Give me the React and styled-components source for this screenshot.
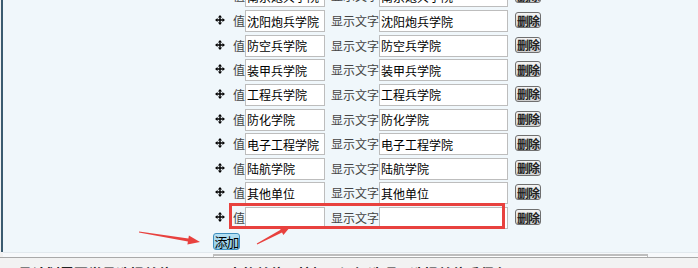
import React from "react";
import styled, { createGlobalStyle } from "styled-components";

const GlobalStyle = createGlobalStyle`
  html, body { margin: 0; padding: 0; }
  body {
    background: #f2f2f2;
    font-family: "Noto Sans CJK SC", "Liberation Sans", sans-serif;
    overflow: hidden;
  }
`;

const Page = styled.div`
  position: relative;
  width: 698px;
  height: 268px;
  overflow: hidden;
`;

const Panel = styled.div`
  margin-left: 1px;
  height: 252px;
  border-left: 2px solid #3b5b70;
  background: #f0f7fb;
  display: grid;
  grid-template-columns: 210px 1fr;
  overflow: hidden;
`;

const LabelCell = styled.div``;

const FieldCell = styled.div`
  display: flex;
  flex-direction: column;
  align-items: flex-start;
`;

const OptionList = styled.div`
  margin-top: -15.9px;
  display: flex;
  flex-direction: column;
`;

const OptionRow = styled.div`
  height: 24.625px;
  display: flex;
  align-items: center;
  padding-left: 2px;
`;

const Handle = styled.svg`
  width: 10px;
  height: 10px;
  margin-top: -2px;
  flex: none;
`;

const Label = styled.span`
  font-size: 12px;
  line-height: 14px;
  color: #444;
  white-space: nowrap;
  margin-left: ${p => p.$gap}px;
`;

const TextBox = styled.input`
  box-sizing: border-box;
  width: ${p => p.$w}px;
  height: 22px;
  margin: 0;
  padding: 0 1px;
  border: 1px solid #bdbdbd;
  background: #fff;
  font-family: inherit;
  font-size: 12px;
  color: #000;
  outline: none;
`;

const DeleteButton = styled.button`
  box-sizing: border-box;
  width: 26px;
  height: 16px;
  margin: -2px 0 0 7px;
  padding: 0;
  border: 1px solid #6f6f6f;
  border-radius: 3px;
  background: linear-gradient(#f4f4f4, #cfcfcf);
  font-family: inherit;
  font-size: 12px;
  line-height: 13px;
  font-weight: bold;
  letter-spacing: -1px;
  white-space: nowrap;
  color: #222;
  overflow: hidden;
`;

const AddButton = styled.button`
  box-sizing: border-box;
  width: 27px;
  height: 17px;
  margin: 2.7px 0 0 0;
  padding: 0;
  border: 1px solid #3f8fbf;
  border-radius: 3px;
  background: linear-gradient(#b6e0f3, #8fcbe6);
  font-family: inherit;
  font-size: 13px;
  line-height: 15px;
  letter-spacing: -1px;
  white-space: nowrap;
  color: #000;
  overflow: hidden;
`;

const NextRow = styled.div`
  height: 5px;
  margin-left: 3px;
  display: grid;
  grid-template-columns: 210px 1fr;
  background: #f7f9fb;
  border-top: 1px solid #e2e9ee;
  box-sizing: border-box;
`;

const NextBox = styled.div`
  width: 435px;
  margin-top: 1px;
  box-sizing: border-box;
  border: 1px solid #bdbdbd;
  border-top-width: 2px;
  border-bottom: none;
  background: #fff;
`;

const BottomStrip = styled.div`
  height: 10px;
  border-top: 1px solid #a9a9a9;
  background: #f2f2f2;
  overflow: hidden;
  padding: 5px 0 0 2px;
  font-size: 14px;
  line-height: 20px;
  font-weight: bold;
  color: #222;
  white-space: nowrap;
`;

const Highlight = styled.div`
  position: absolute;
  left: 229px;
  top: 203px;
  width: 276px;
  height: 26px;
  box-sizing: border-box;
  border: 3px solid #e8413e;
  pointer-events: none;
`;

const Overlay = styled.svg`
  position: absolute;
  left: 0;
  top: 0;
  width: 698px;
  height: 268px;
  pointer-events: none;
`;

const options = [
  "南京炮兵学院",
  "沈阳炮兵学院",
  "防空兵学院",
  "装甲兵学院",
  "工程兵学院",
  "防化学院",
  "电子工程学院",
  "陆航学院",
  "其他单位",
  "",
];

// tapered arrow outline, thin at the tail and wide at the head
function arrowPoints(x1, y1, x2, y2, head = 11, headW = 5, tail = 0.5, neck = 1.5) {
  const dx = x2 - x1, dy = y2 - y1, len = Math.hypot(dx, dy);
  const ux = dx / len, uy = dy / len, nx = -uy, ny = ux;
  const bx = x2 - ux * head, by = y2 - uy * head;
  return [
    [x1 + nx * tail, y1 + ny * tail],
    [bx + nx * neck, by + ny * neck],
    [bx + nx * headW, by + ny * headW],
    [x2, y2],
    [bx - nx * headW, by - ny * headW],
    [bx - nx * neck, by - ny * neck],
    [x1 - nx * tail, y1 - ny * tail],
  ].map(p => p.map(v => v.toFixed(1)).join(",")).join(" ");
}

const MoveIcon = () => (
  <Handle viewBox="0 0 9 9">
    <path d="M4.5 2v5M2 4.5h5" stroke="#000" strokeWidth="1.3" />
    <path d="M4.5 0L2.6 2.3h3.8zM4.5 9L2.6 6.7h3.8zM0 4.5L2.3 2.6v3.8zM9 4.5L6.7 2.6v3.8z" fill="#000" />
  </Handle>
);

const App = () => (
  <>
    <GlobalStyle />
    <Page>
      <Panel>
        <LabelCell />
        <FieldCell>
          <OptionList>
            {options.map((name, i) => (
              <OptionRow key={i}>
                <MoveIcon />
                <Label $gap={8}>值</Label>
                <TextBox $w={80} value={name} readOnly />
                <Label $gap={6}>显示文字</Label>
                <TextBox $w={129} value={name} readOnly />
                <DeleteButton>删除</DeleteButton>
              </OptionRow>
            ))}
          </OptionList>
          <AddButton>添加</AddButton>
        </FieldCell>
      </Panel>
      <NextRow>
        <div />
        <NextBox />
      </NextRow>
      <BottomStrip>1. 员计划需要学员选择单位，即页面中的单位下拉框，添加选项：选择单位后保存。</BottomStrip>
      <Highlight />
      <Overlay viewBox="0 0 698 268">
        <polygon points={arrowPoints(139, 232, 200, 242, 12, 4.5)} fill="#e8413e" />
        <polygon points={arrowPoints(257, 244, 291, 226, 11, 4.5)} fill="#e8413e" />
      </Overlay>
    </Page>
  </>
);

export default App;
